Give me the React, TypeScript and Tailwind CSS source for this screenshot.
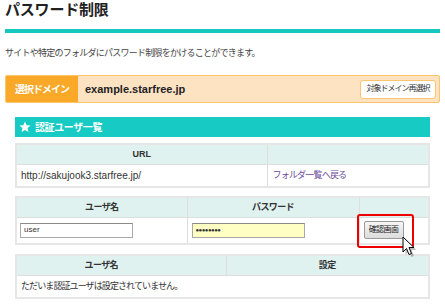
import React from "react";

const F = "font-['Liberation_Sans','Noto_Sans_CJK_JP',sans-serif]";

export default function App() {
  return (
    <div className={`relative w-[445px] h-[307px] overflow-hidden bg-white text-[#333] ${F}`}>
      <div className="px-[5px]">
        <h1 className="text-[15px] font-bold leading-[20px] text-[#222] tracking-[-0.2px]">パスワード制限</h1>
        <div className="mt-[9px] h-[4px] bg-[#14c7bf]" />
        <p className="mt-[14px] text-[9px] leading-[12px] tracking-[-0.75px] text-[#444]">
          サイトや特定のフォルダにパスワード制限をかけることができます。
        </p>
        <div className="mt-[16px] flex h-[28px] items-stretch overflow-hidden rounded-[2px] border border-[#fcc46e] bg-[#fde3c2]">
          <div className="flex w-[72px] items-center justify-center bg-[#f9a827] text-[10px] font-bold tracking-[-1px] text-white">
            選択ドメイン
          </div>
          <div className="flex flex-1 items-center pl-[7px] text-[11px] font-bold text-[#222]">example.starfree.jp</div>
          <div className="flex items-center pr-[3px]">
            <div className="flex h-[19px] w-[76px] items-center justify-center rounded-[3px] border border-[#fcc46e] bg-white text-[8px] tracking-[-1px] text-[#333]">
              対象ドメイン再選択
            </div>
          </div>
        </div>

        <div className="px-[10px]">
          <div className="mt-[14px] flex h-[20px] items-center bg-[#17cbc4] pl-[4px] text-[10px] font-bold tracking-[-0.4px] text-white">
            <svg width="12" height="12" viewBox="0 0 24 24" className="mr-[4px]">
              <path fill="#fff" d="M12 1l3.2 7.3 7.9.7-6 5.2 1.8 7.8L12 17.9 5.1 22l1.8-7.8-6-5.2 7.9-.7z" />
            </svg>
            認証ユーザ一覧
          </div>

          <table className="mt-[6px] w-full table-fixed border-collapse border-2 border-[#e6e6e6] text-[9px]">
            <colgroup>
              <col className="w-[251px]" />
              <col />
            </colgroup>
            <tbody>
              <tr className="h-[20px] bg-[#dff2f0]">
                <th className="border border-[#dedede] font-bold text-[#333]">URL</th>
                <th className="border border-[#dedede]" />
              </tr>
              <tr className="h-[23px]">
                <td className="border border-[#dedede] pl-[4px] text-[10px] text-[#333]">http://sakujook3.starfree.jp/</td>
                <td className="border border-[#dedede] pl-[5px] tracking-[-0.8px] text-[#6a4c9c]">フォルダ一覧へ戻る</td>
              </tr>
            </tbody>
          </table>

          <table className="mt-[8px] w-full table-fixed border-collapse border-2 border-[#e6e6e6] text-[9px]">
            <colgroup>
              <col className="w-[171px]" />
              <col className="w-[172px]" />
              <col />
            </colgroup>
            <tbody>
              <tr className="h-[20px] bg-[#dff2f0]">
                <th className="border border-[#dedede] font-bold tracking-[-0.6px] text-[#333]">ユーザ名</th>
                <th className="border border-[#dedede] font-bold tracking-[-0.6px] text-[#333]">パスワード</th>
                <th className="border border-[#dedede]" />
              </tr>
              <tr className="h-[27px]">
                <td className="border border-[#dedede] pl-[3px]">
                  <div className="flex h-[15px] w-[113px] items-center border border-[#a9a9a9] border-t-[#8a8a8a] bg-white pl-[3px] text-[8px] text-[#333]">
                    user
                  </div>
                </td>
                <td className="border border-[#dedede] pl-[4px]">
                  <div className="flex h-[15px] w-[113px] items-center border border-[#a9a9a9] border-t-[#8a8a8a] bg-[#ffffc4] pl-[3px] text-[6px] tracking-[-0.5px] text-[#333]">
                    ●●●●●●●●
                  </div>
                </td>
                <td className="relative border border-[#dedede] pl-[4px]">
                  <div className="flex h-[18px] w-[40px] items-center justify-center rounded-[2px] border border-[#9a9a9a] bg-gradient-to-b from-[#f6f6f6] to-[#dcdcdc] text-[8px] tracking-[-0.6px] text-[#222]">
                    確認画面
                  </div>
                  <div className="absolute left-[-3px] top-[-4px] h-[34px] w-[57px] rounded-[3px] border-2 border-[#ee0000]" />
                </td>
              </tr>
            </tbody>
          </table>

          <table className="mt-[9px] w-full table-fixed border-collapse border-2 border-[#e6e6e6] text-[9px]">
            <colgroup>
              <col className="w-[210px]" />
              <col />
            </colgroup>
            <tbody>
              <tr className="h-[20px] bg-[#dff2f0]">
                <th className="border border-[#dedede] pr-[40px] font-bold tracking-[-0.6px] text-[#333]">ユーザ名</th>
                <th className="border border-[#dedede] font-bold tracking-[-0.6px] text-[#333]">設定</th>
              </tr>
              <tr className="h-[23px]">
                <td colSpan={2} className="border border-[#dedede] pl-[4px] tracking-[-0.9px] text-[#333]">
                  ただいま認証ユーザは設定されていません。
                </td>
              </tr>
            </tbody>
          </table>
        </div>
      </div>

      <svg className="absolute left-[401px] top-[235px]" width="17" height="23" viewBox="0 0 17 23">
        <path
          d="M3 3 L3 18 L6.5 14.5 L9 20.5 L11.5 19.5 L9 13.5 L14 13.5 Z"
          fill="#000"
          opacity="0.25"
          transform="translate(1.5 1.5)"
        />
        <path
          d="M2 2 L2 17 L5.5 13.5 L8 19.5 L10.5 18.5 L8 12.5 L13 12.5 Z"
          fill="#fff"
          stroke="#000"
          strokeWidth="1"
          strokeLinejoin="round"
        />
      </svg>
    </div>
  );
}
